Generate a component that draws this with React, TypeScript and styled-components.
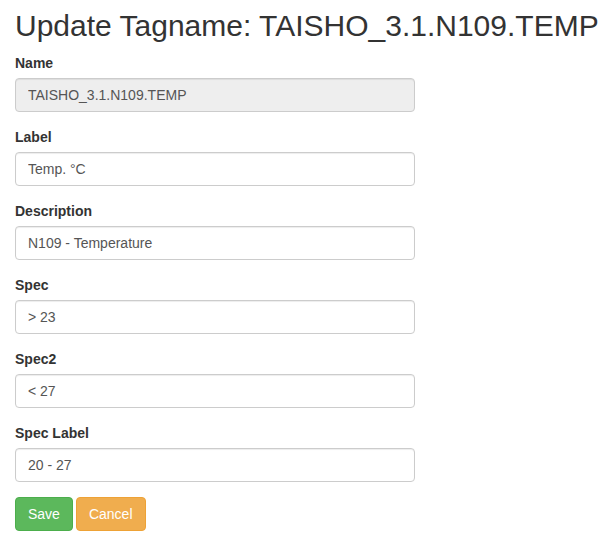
import React from "react";
import styled, { createGlobalStyle } from "styled-components";

const Global = createGlobalStyle`
  html, body { margin: 0; padding: 0; background: #fff; }
  body {
    font-family: "Liberation Sans", Arial, Helvetica, sans-serif;
    font-size: 14px;
    line-height: 1.42857143;
    color: #333;
  }
  * { box-sizing: border-box; }
`;

const Page = styled.div`
  padding: 0 15px;
`;

const Title = styled.h2`
  font-size: 30px;
  font-weight: 500;
  line-height: 1.1;
  margin: 9px 0 11px;
  white-space: nowrap;
  color: #333;
`;

const Form = styled.form`
  width: 400px;
`;

const Group = styled.div`
  margin-bottom: 15px;
`;

const Label = styled.label`
  display: inline-block;
  max-width: 100%;
  margin-bottom: 5px;
  font-weight: 700;
`;

const Input = styled.input`
  display: block;
  width: 100%;
  height: 34px;
  padding: 6px 12px;
  font-family: inherit;
  font-size: 14px;
  line-height: 1.42857143;
  color: #555;
  background-color: #fff;
  border: 1px solid #ccc;
  border-radius: 4px;
  box-shadow: inset 0 1px 1px rgba(0, 0, 0, 0.075);
  &:disabled {
    background-color: #eee;
    opacity: 1;
    cursor: not-allowed;
  }
`;

const Actions = styled.div`
  display: flex;
  gap: 3px;
`;

const Button = styled.button<{ $variant: "success" | "warning" }>`
  display: inline-block;
  height: 34px;
  padding: 6px 12px;
  font-family: inherit;
  font-size: 14px;
  line-height: 1.42857143;
  color: #fff;
  border-radius: 4px;
  border: 1px solid
    ${(p) => (p.$variant === "success" ? "#4cae4c" : "#eea236")};
  background-color: ${(p) =>
    p.$variant === "success" ? "#5cb85c" : "#f0ad4e"};
  cursor: pointer;
`;

const fields: { label: string; value: string; disabled?: boolean }[] = [
  { label: "Name", value: "TAISHO_3.1.N109.TEMP", disabled: true },
  { label: "Label", value: "Temp. °C" },
  { label: "Description", value: "N109 - Temperature" },
  { label: "Spec", value: "> 23" },
  { label: "Spec2", value: "< 27" },
  { label: "Spec Label", value: "20 - 27" },
];

export default function App() {
  return (
    <>
      <Global />
      <Page>
        <Title>Update Tagname: TAISHO_3.1.N109.TEMP</Title>
        <Form onSubmit={(e) => e.preventDefault()}>
          {fields.map((f) => (
            <Group key={f.label}>
              <Label>{f.label}</Label>
              <Input defaultValue={f.value} disabled={f.disabled} />
            </Group>
          ))}
          <Actions>
            <Button type="submit" $variant="success">Save</Button>
            <Button type="button" $variant="warning">Cancel</Button>
          </Actions>
        </Form>
      </Page>
    </>
  );
}
